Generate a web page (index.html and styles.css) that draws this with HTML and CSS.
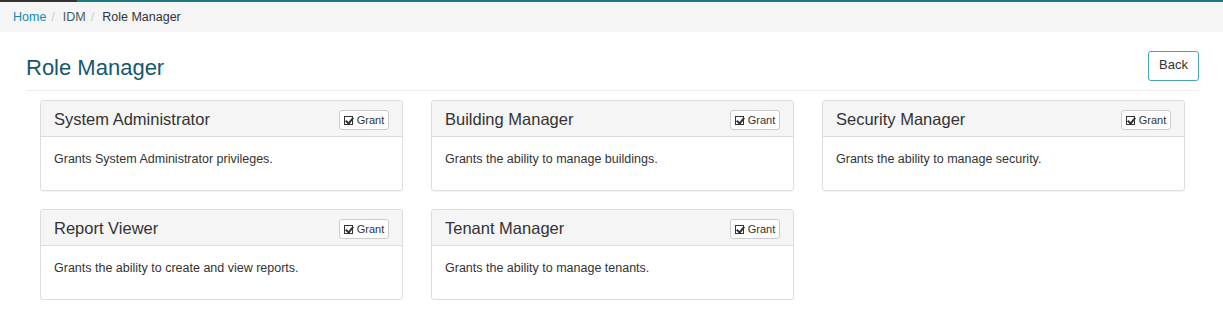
FILE: index.html
```html
<!DOCTYPE html>
<html lang="en">
<head>
  <meta charset="UTF-8">
  <title>Role Manager</title>
  <link rel="stylesheet" href="styles.css">
</head>
<body>
  <div class="topbar"><div class="topbar-dark"></div></div>
  <ol class="breadcrumb">
    <li><a href="#">Home</a></li>
    <li><a href="#" class="muted">IDM</a></li>
    <li class="active">Role Manager</li>
  </ol>

  <div class="page">
    <div class="page-header">
      <h1>Role Manager</h1>
      <button class="btn-back">Back</button>
    </div>

    <div class="roles">
      <div class="panel">
        <div class="panel-heading">
          <h3>System Administrator</h3>
          <button class="btn-grant"><span class="check"></span>Grant</button>
        </div>
        <div class="panel-body">Grants System Administrator privileges.</div>
      </div>
      <div class="panel">
        <div class="panel-heading">
          <h3>Building Manager</h3>
          <button class="btn-grant"><span class="check"></span>Grant</button>
        </div>
        <div class="panel-body">Grants the ability to manage buildings.</div>
      </div>
      <div class="panel">
        <div class="panel-heading">
          <h3>Security Manager</h3>
          <button class="btn-grant"><span class="check"></span>Grant</button>
        </div>
        <div class="panel-body">Grants the ability to manage security.</div>
      </div>
      <div class="panel">
        <div class="panel-heading">
          <h3>Report Viewer</h3>
          <button class="btn-grant"><span class="check"></span>Grant</button>
        </div>
        <div class="panel-body">Grants the ability to create and view reports.</div>
      </div>
      <div class="panel">
        <div class="panel-heading">
          <h3>Tenant Manager</h3>
          <button class="btn-grant"><span class="check"></span>Grant</button>
        </div>
        <div class="panel-body">Grants the ability to manage tenants.</div>
      </div>
    </div>
  </div>
</body>
</html>
```

FILE: styles.css
```css
body {
  font-family: "Liberation Sans", Arial, sans-serif;
  font-size: 12.5px;
  color: #333;
  margin: 0;
  background: #fff;
}
.topbar {
  height: 2px;
  background: #1d7886;
}
.topbar-dark {
  width: 77px;
  height: 2px;
  background: #333;
}
.breadcrumb {
  list-style: none;
  margin: 0;
  padding: 7px 13px 0;
  height: 23px;
  background: #f5f5f5;
  display: flex;
  line-height: 16px;
}
.breadcrumb li + li::before {
  content: "/";
  color: #ccc;
  padding: 0 8px 0 5px;
}
.breadcrumb a {
  color: #1a8ab0;
  text-decoration: none;
}
.breadcrumb a.muted {
  color: #4a5866;
}
.breadcrumb .active {
  color: #333;
}
.page {
  padding: 0 24px 0 26px;
}
.page-header {
  display: flex;
  justify-content: space-between;
  align-items: flex-start;
  border-bottom: 1px solid #eee;
  padding-top: 18px;
  height: 40px;
}
.page-header h1 {
  margin: 4px 0 0;
  font-size: 22px;
  font-weight: normal;
  color: #14596b;
  line-height: 28px;
}
.btn-back {
  font-family: inherit;
  font-size: 13px;
  color: #333;
  background: #fff;
  border: 1px solid #4aa5b3;
  border-radius: 3px;
  width: 51px;
  height: 30px;
  padding: 0 0 3px;
  margin-top: 1px;
}
.roles {
  display: grid;
  grid-template-columns: repeat(3, 363px);
  column-gap: 28px;
  row-gap: 18px;
  padding: 9px 14px 0;
}
.panel {
  border: 1px solid #ddd;
  border-radius: 3px;
  box-shadow: 0 1px 1px rgba(0, 0, 0, 0.05);
  height: 89px;
}
.panel-heading {
  display: flex;
  justify-content: space-between;
  align-items: center;
  background: #f5f5f5;
  border-bottom: 1px solid #ddd;
  height: 35px;
  padding: 1px 13px 0;
  box-sizing: border-box;
  height: 36px;
  border-radius: 3px 3px 0 0;
}
.panel-heading h3 {
  margin: 0;
  font-size: 16.5px;
  font-weight: normal;
  color: #333;
}
.btn-grant {
  font-family: inherit;
  font-size: 11px;
  color: #333;
  background: #fff;
  border: 1px solid #ccc;
  border-radius: 3px;
  height: 20px;
  width: 50px;
  padding: 0;
  display: flex;
  align-items: center;
  justify-content: center;
  margin-top: 2px;
}
.check {
  position: relative;
  width: 7px;
  height: 7px;
  border: 1px solid #333;
  margin-right: 4px;
}
.check::after {
  content: "";
  position: absolute;
  left: 2px;
  top: -1px;
  width: 3px;
  height: 6px;
  border: solid #333;
  border-width: 0 2px 2px 0;
  transform: rotate(40deg);
}
.panel-body {
  padding: 15px 13px;
  line-height: 14px;
}
```
